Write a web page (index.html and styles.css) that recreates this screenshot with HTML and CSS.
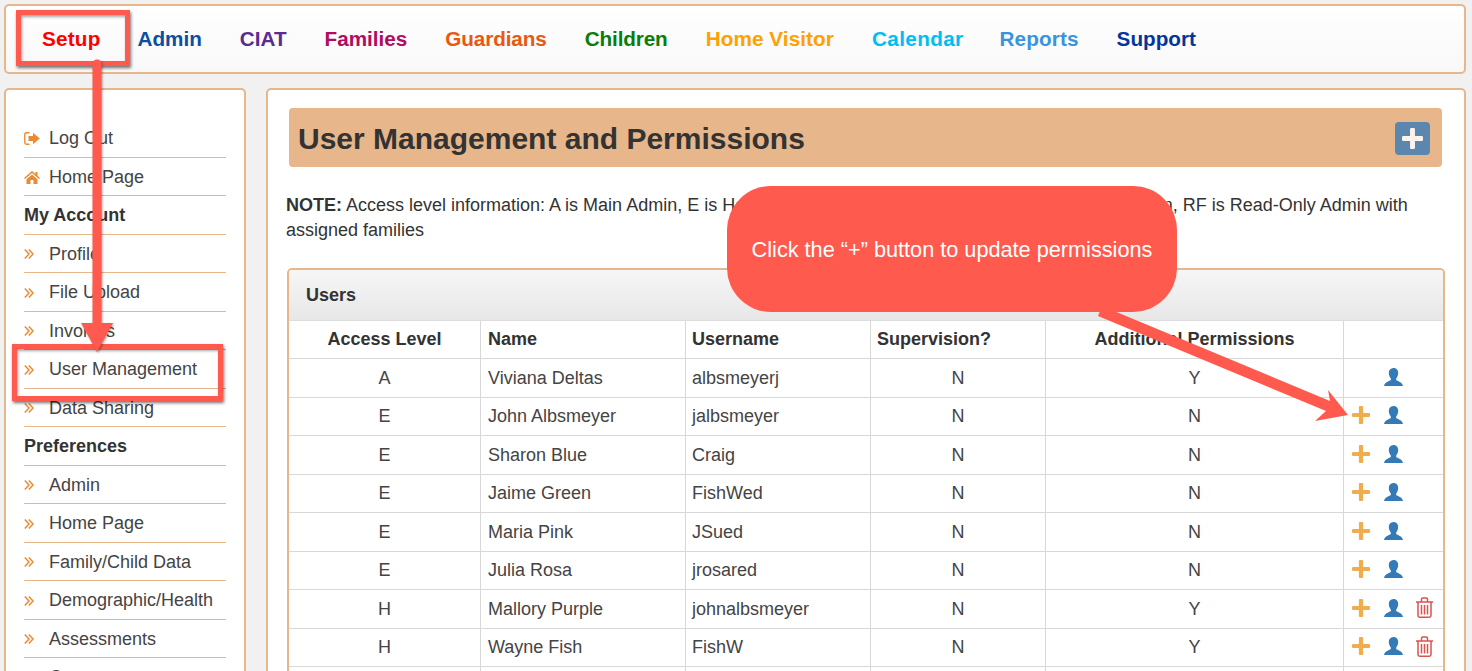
FILE: index.html
```html
<!DOCTYPE html>
<html lang="en">
<head>
<meta charset="utf-8">
<title>User Management and Permissions</title>
<link rel="stylesheet" href="styles.css">
</head>
<body>
<svg width="0" height="0" class="defs" aria-hidden="true">
  <symbol id="i-user" viewBox="0 0 19 18"><path d="M9.5 0C12.6 0 14.2 2.2 14.2 5C14.2 7.4 13 9.5 12.2 10.4V12C13.2 13 18.4 14 19 18H0C.6 14 5.8 13 6.8 12V10.4C6 9.5 4.8 7.4 4.8 5C4.8 2.2 6.4 0 9.5 0Z"/></symbol>
  <symbol id="i-plus" viewBox="0 0 17 17"><path d="M6.5 1Q6.5 0 7.5 0H9.5Q10.5 0 10.5 1V6.5H16Q17 6.5 17 7.5V9.5Q17 10.5 16 10.5H10.5V16Q10.5 17 9.5 17H7.5Q6.5 17 6.5 16V10.5H1Q0 10.5 0 9.5V7.5Q0 6.5 1 6.5H6.5Z"/></symbol>
  <symbol id="i-trash" viewBox="0 0 17 21"><path d="M0 5H17M5.5 5V2.2Q5.5 1 6.7 1H10.3Q11.5 1 11.5 2.2V5M2 5.5V18.5Q2 20.2 3.7 20.2H13.3Q15 20.2 15 18.5V5.5M5.5 8V17.5M8.5 8V17.5M11.5 8V17.5" fill="none" stroke="currentColor" stroke-width="1.5"/></symbol>
  <symbol id="i-dbl" viewBox="0 0 10 10"><path d="M.8 .5L5 5L.8 9.5M4.8 .5L9 5L4.8 9.5" fill="none" stroke="currentColor" stroke-width="1.5"/></symbol>
  <symbol id="i-logout" viewBox="0 0 16 13"><path d="M5.5 .8H2.5Q.8 .8 .8 2.5V10.5Q.8 12.2 2.5 12.2H5.5" fill="none" stroke="currentColor" stroke-width="1.4"/><path d="M4.5 4H9V.8L15.8 6.5L9 12.2V9H4.5Z" fill="currentColor"/></symbol>
  <symbol id="i-home" viewBox="0 0 16 13"><path d="M8 0L11.5 3V1H13.5V4.7L16 6.9L15 8L8 2L1 8L0 6.9Z M8 3.5L13.5 8.2V13H9.5V9H6.5V13H2.5V8.2Z" fill="currentColor"/></symbol>
</svg>

<header class="topbar">
  <nav class="mainnav">
    <a class="nav-link c-setup">Setup</a>
    <a class="nav-link c-admin">Admin</a>
    <a class="nav-link c-ciat">CIAT</a>
    <a class="nav-link c-families">Families</a>
    <a class="nav-link c-guardians">Guardians</a>
    <a class="nav-link c-children">Children</a>
    <a class="nav-link c-visitor">Home Visitor</a>
    <a class="nav-link c-calendar">Calendar</a>
    <a class="nav-link c-reports">Reports</a>
    <a class="nav-link c-support">Support</a>
  </nav>
</header>

<div class="columns">
  <aside class="sidebar">
    <ul class="sidelist">
      <li class="side-row"><svg class="side-ico"><use href="#i-logout"/></svg>Log Out</li>
      <li class="side-row"><svg class="side-ico"><use href="#i-home"/></svg>Home Page</li>
      <li class="side-row side-head">My Account</li>
      <li class="side-row"><svg class="side-ico side-dbl"><use href="#i-dbl"/></svg>Profile</li>
      <li class="side-row"><svg class="side-ico side-dbl"><use href="#i-dbl"/></svg>File Upload</li>
      <li class="side-row"><svg class="side-ico side-dbl"><use href="#i-dbl"/></svg>Invoices</li>
      <li class="side-row"><svg class="side-ico side-dbl"><use href="#i-dbl"/></svg>User Management</li>
      <li class="side-row"><svg class="side-ico side-dbl"><use href="#i-dbl"/></svg>Data Sharing</li>
      <li class="side-row side-head">Preferences</li>
      <li class="side-row"><svg class="side-ico side-dbl"><use href="#i-dbl"/></svg>Admin</li>
      <li class="side-row"><svg class="side-ico side-dbl"><use href="#i-dbl"/></svg>Home Page</li>
      <li class="side-row"><svg class="side-ico side-dbl"><use href="#i-dbl"/></svg>Family/Child Data</li>
      <li class="side-row"><svg class="side-ico side-dbl"><use href="#i-dbl"/></svg>Demographic/Health</li>
      <li class="side-row"><svg class="side-ico side-dbl"><use href="#i-dbl"/></svg>Assessments</li>
      <li class="side-row"><svg class="side-ico side-dbl"><use href="#i-dbl"/></svg>Contacts</li>
    </ul>
  </aside>

  <main class="content">
    <div class="titlebar">
      <h1 class="title">User Management and Permissions</h1>
      <span class="addbtn"><svg class="addbtn-ico"><use href="#i-plus"/></svg></span>
    </div>
    <p class="note"><b>NOTE:</b> Access level information: A is Main Admin, E is Home Visitor Supervisor, H is Home Visitor, RO is Admin, RF is Read-Only Admin with assigned families</p>

    <section class="panel">
      <h2 class="panel-head">Users</h2>
      <table class="users">
        <thead>
          <tr><th class="col-a">Access Level</th><th class="col-n left">Name</th><th class="col-u left">Username</th><th class="col-s left">Supervision?</th><th class="col-p">Additional Permissions</th><th class="col-x"></th></tr>
        </thead>
        <tbody>
          <tr><td>A</td><td class="left">Viviana Deltas</td><td class="left">albsmeyerj</td><td>N</td><td>Y</td><td><div class="acts"><svg class="act a-plus hide"><use href="#i-plus"/></svg><svg class="act a-user"><use href="#i-user"/></svg><svg class="act a-trash hide"><use href="#i-trash"/></svg></div></td></tr>
          <tr><td>E</td><td class="left">John Albsmeyer</td><td class="left">jalbsmeyer</td><td>N</td><td>N</td><td><div class="acts"><svg class="act a-plus"><use href="#i-plus"/></svg><svg class="act a-user"><use href="#i-user"/></svg><svg class="act a-trash hide"><use href="#i-trash"/></svg></div></td></tr>
          <tr><td>E</td><td class="left">Sharon Blue</td><td class="left">Craig</td><td>N</td><td>N</td><td><div class="acts"><svg class="act a-plus"><use href="#i-plus"/></svg><svg class="act a-user"><use href="#i-user"/></svg><svg class="act a-trash hide"><use href="#i-trash"/></svg></div></td></tr>
          <tr><td>E</td><td class="left">Jaime Green</td><td class="left">FishWed</td><td>N</td><td>N</td><td><div class="acts"><svg class="act a-plus"><use href="#i-plus"/></svg><svg class="act a-user"><use href="#i-user"/></svg><svg class="act a-trash hide"><use href="#i-trash"/></svg></div></td></tr>
          <tr><td>E</td><td class="left">Maria Pink</td><td class="left">JSued</td><td>N</td><td>N</td><td><div class="acts"><svg class="act a-plus"><use href="#i-plus"/></svg><svg class="act a-user"><use href="#i-user"/></svg><svg class="act a-trash hide"><use href="#i-trash"/></svg></div></td></tr>
          <tr><td>E</td><td class="left">Julia Rosa</td><td class="left">jrosared</td><td>N</td><td>N</td><td><div class="acts"><svg class="act a-plus"><use href="#i-plus"/></svg><svg class="act a-user"><use href="#i-user"/></svg><svg class="act a-trash hide"><use href="#i-trash"/></svg></div></td></tr>
          <tr><td>H</td><td class="left">Mallory Purple</td><td class="left">johnalbsmeyer</td><td>N</td><td>Y</td><td><div class="acts"><svg class="act a-plus"><use href="#i-plus"/></svg><svg class="act a-user"><use href="#i-user"/></svg><svg class="act a-trash"><use href="#i-trash"/></svg></div></td></tr>
          <tr><td>H</td><td class="left">Wayne Fish</td><td class="left">FishW</td><td>N</td><td>Y</td><td><div class="acts"><svg class="act a-plus"><use href="#i-plus"/></svg><svg class="act a-user"><use href="#i-user"/></svg><svg class="act a-trash"><use href="#i-trash"/></svg></div></td></tr>
          <tr><td></td><td></td><td></td><td></td><td></td><td></td></tr>
        </tbody>
      </table>
    </section>
  </main>
</div>

<div class="mark mark-setup"></div>
<div class="mark mark-user"></div>
<svg class="arrows" viewBox="0 0 1472 671" aria-hidden="true">
  <path class="arrow-s arrow-down" d="M92.5 64A4.5 4.5 0 0 1 101.5 64V323H113L97 352L81 323H92.5Z"/>
  <polygon class="arrow-s" points="1102,306 1098,316 1326,411 1315,421 1348,415 1328,390 1330,401"/>
</svg>
<div class="callout">Click the “+” button to update permissions</div>
</body>
</html>
```

FILE: styles.css
```css
* { box-sizing: border-box; }
html, body { margin: 0; height: 671px; overflow: hidden; }
body {
  position: relative;
  padding: 3.5px 6px 0 3.5px;
  background: #f1f1f1;
  font-family: "Liberation Sans", Arial, sans-serif;
  font-size: 18px;
  color: #333;
}
.defs { position: absolute; }

.topbar {
  height: 70px;
  border: 2px solid #e7b68a;
  border-radius: 5px;
  background: linear-gradient(#fff, #f8f8f8);
  display: flex;
  align-items: center;
  padding-left: 17.5px;
}
.mainnav { display: flex; padding-top: 1px; }
.nav-link {
  font-size: 20.7px;
  font-weight: bold;
  padding: 0 19px;
  line-height: 30px;
}
.c-setup { color: #f00; letter-spacing: .2px; margin-right: -1px; }
.c-admin { color: #0b4ea2; }
.c-ciat { color: #5b2a92; }
.c-families { color: #b10b62; }
.c-guardians { color: #e8590f; letter-spacing: -.11px; }
.c-children { color: #0a7d0a; letter-spacing: -.12px; }
.c-visitor { color: #ffa100; letter-spacing: .09px; }
.c-calendar { color: #00bdf2; letter-spacing: .37px; margin-right: -2px; }
.c-reports { color: #3a94db; letter-spacing: .14px; }
.c-support { color: #03359e; }

.columns {
  display: flex;
  gap: 20px;
  margin-top: 14px;
  align-items: flex-start;
}
.sidebar {
  width: 242px;
  flex: none;
  height: 700px;
  background: #fff;
  border: 2px solid #e7b68a;
  border-radius: 5px;
  padding: 29.5px 18px 0 18.5px;
}
.sidelist { list-style: none; margin: 0; padding: 0; }
.side-row {
  height: 38.5px;
  padding-top: 2px;
  border-bottom: 1px solid #e7b68a;
  display: flex;
  align-items: center;
  color: #444;
  white-space: nowrap;
}
.side-head { font-weight: bold; color: #333; }
.side-ico {
  width: 16px;
  height: 13px;
  margin-right: 9px;
  flex: none;
  color: #ea8a35;
}
.side-dbl { width: 10px; height: 10px; margin-right: 15px; }

.content {
  flex: 1;
  height: 700px;
  background: #fff;
  border: 2px solid #e7b68a;
  border-radius: 5px;
  padding: 18.5px 18.5px 0;
}
.titlebar {
  margin: 0 4px 0 3px;
  height: 59px;
  background: #e7b68a;
  border-radius: 4px;
  display: flex;
  align-items: center;
  justify-content: space-between;
  padding: 0 12px 0 9px;
}
.title { margin: 2px 0 0; font-size: 30px; font-weight: bold; color: #333; }
.addbtn {
  width: 35px;
  height: 33px;
  margin-top: 2px;
  background: #5b86ae;
  border-radius: 4px;
  display: flex;
  align-items: center;
  justify-content: center;
}
.addbtn-ico { width: 21px; height: 21px; fill: #fbf3ec; }
.note { margin: 26px 0 24.5px; line-height: 25px; }

.panel {
  margin: 0 0 0 1px;
  width: 1158px;
  border: 2px solid #e7b68a;
  border-radius: 5px;
  overflow: hidden;
}
.panel-head {
  margin: 0;
  height: 51px;
  padding: 1px 0 0 17px;
  display: flex;
  align-items: center;
  font-size: 18px;
  font-weight: bold;
  color: #333;
  background: linear-gradient(#f6f6f6, #e7e7e7);
  border-bottom: 1px solid #ddd;
}
.users {
  width: 100%;
  border-collapse: separate;
  border-spacing: 0;
  table-layout: fixed;
  background: #fff;
}
.users th, .users td {
  height: 38.5px;
  padding: 1px 7px 0;
  text-align: center;
  border-bottom: 1px solid #d8d8d8;
  border-right: 1px solid #d8d8d8;
  font-size: 18px;
  color: #444;
}
.users th { font-weight: bold; color: #333; }
.users th:last-child, .users td:last-child { border-right: 0; padding: 0; }
.users .left { text-align: left; }
.users th:nth-child(3), .users td:nth-child(3), .users th:nth-child(4) { padding-left: 6px; }
.col-a { width: 192px; }
.col-n { width: 205px; }
.col-u { width: 185px; }
.col-s { width: 175px; }
.col-p { width: 298px; }

.acts {
  display: flex;
  justify-content: center;
  align-items: center;
  gap: 14px;
  margin-top: -2px;
  padding-right: 3px;
}
.act { flex: none; }
.a-plus { width: 18px; height: 18px; fill: #f0ad4e; }
.a-user { width: 19px; height: 18px; fill: #337ab7; }
.a-trash { width: 17px; height: 21px; color: #d9534f; margin-left: -1px; }
.hide { visibility: hidden; }

.mark {
  position: absolute;
  border: 5px solid #ff5a4d;
  box-shadow: 1px 2px 3px rgba(0, 0, 0, .55), inset 1px 2px 3px rgba(0, 0, 0, .35);
}
.mark-setup { left: 16px; top: 10px; width: 114px; height: 56px; }
.mark-user { left: 12px; top: 344px; width: 211px; height: 57px; }
.arrows {
  position: absolute;
  left: 0;
  top: 0;
  width: 1472px;
  height: 671px;
}
.arrow-s { fill: #ff5a4d; }
.arrow-down { filter: drop-shadow(1px 1px 1px rgba(0, 0, 0, .35)); }
.callout {
  position: absolute;
  left: 727px;
  top: 186px;
  width: 450px;
  height: 126px;
  padding-top: 2px;
  background: #ff5a4d;
  border-radius: 44px;
  color: #fff;
  font-size: 21.7px;
  display: flex;
  align-items: center;
  justify-content: center;
}
```
